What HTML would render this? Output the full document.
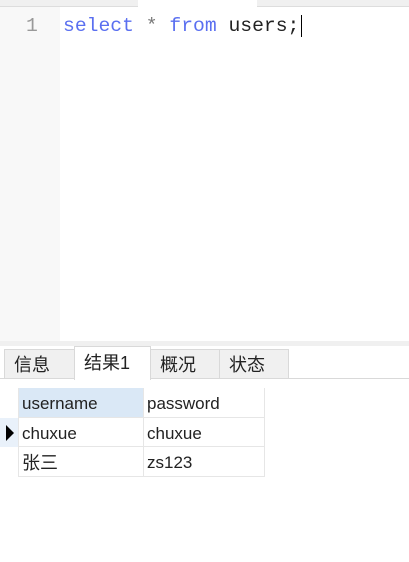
<!DOCTYPE html><html><head><meta charset="utf-8"><style>
body{margin:0;width:409px;height:562px;overflow:hidden;background:#fff;font-family:"Liberation Sans","Noto Sans CJK SC",sans-serif;position:relative}
.a{position:absolute}
.code{font-family:"Liberation Mono",monospace;font-size:19.7px;line-height:24px}
.tab{position:absolute;top:349px;height:29px;background:#f0f0f0;border:1px solid #d9d9d9;border-bottom:none;font-size:18px;line-height:30px;color:#222;box-sizing:border-box;padding-left:9px}
.c{position:absolute;font-size:17px;color:#222;line-height:32px;padding-left:4px;box-sizing:border-box;border-right:1px solid #e6e6e6;border-bottom:1px solid #e6e6e6}
</style></head><body>
<div class="a" style="left:0;top:0;width:409px;height:6px;background:#f0f0f0;border-bottom:1px solid #ddd"></div>
<div class="a" style="left:138px;top:0;width:119px;height:7px;background:#fff"></div>
<div class="a" style="left:0;top:7px;width:60px;height:334px;background:#f8f8f8"></div>
<div class="a code" style="left:26px;top:14px;color:#999">1</div>
<div class="a code" style="left:63px;top:14px;white-space:pre"><span style="color:#5a6ff0">select</span> <span style="color:#777">*</span> <span style="color:#5a6ff0">from</span> <span style="color:#222">users;</span></div>
<div class="a" style="left:301px;top:15px;width:1px;height:22px;background:#000"></div>
<div class="a" style="left:0;top:341px;width:409px;height:5px;background:#f0f0f0"></div>
<div class="a" style="left:0;top:378px;width:409px;height:1px;background:#d9d9d9"></div>
<div class="tab" style="left:4px;width:71px">信息</div>
<div class="tab" style="left:74px;top:346px;height:34px;width:77px;background:#fff;line-height:32px">结果1</div>
<div class="tab" style="left:150px;width:70px">概况</div>
<div class="tab" style="left:219px;width:70px">状态</div>
<div class="c" style="left:18px;top:388px;width:126px;height:30px;background:#dae8f6">username</div>
<div class="c" style="left:143px;top:388px;width:122px;height:30px">password</div>
<div class="a" style="left:0;top:418px;width:18px;height:29px;background:#e9f1fa"></div>
<div class="a" style="left:6px;top:425px;width:0;height:0;border-left:8px solid #000;border-top:8px solid transparent;border-bottom:8px solid transparent"></div>
<div class="c" style="left:18px;top:418px;width:126px;height:29px;line-height:31px">chuxue</div>
<div class="c" style="left:143px;top:418px;width:122px;height:29px;line-height:31px">chuxue</div>
<div class="c" style="left:18px;top:447px;width:126px;height:30px;font-size:18px">张三</div>
<div class="c" style="left:143px;top:447px;width:122px;height:30px">zs123</div>
<div class="a" style="left:18px;top:388px;width:1px;height:89px;background:#e6e6e6"></div>
</body></html>
